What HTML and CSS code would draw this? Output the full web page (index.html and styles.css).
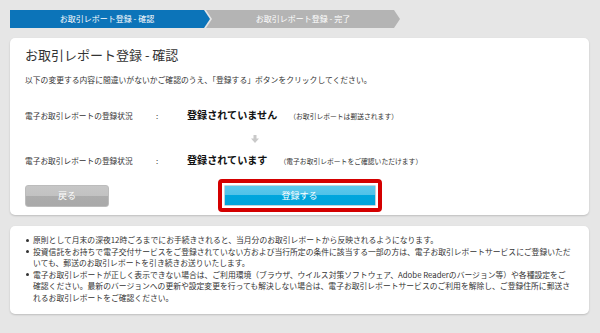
FILE: index.html
```html
<!DOCTYPE html>
<html lang="ja">
<head>
<meta charset="utf-8">
<title>お取引レポート登録 - 確認</title>
<link rel="stylesheet" href="styles.css">
</head>
<body>
<div class="page">
  <div class="steps">
    <div class="step step-active">お取引レポート登録 - 確認</div>
    <div class="step step-next">お取引レポート登録 - 完了</div>
  </div>

  <section class="card main">
    <h1 class="title">お取引レポート登録 - 確認</h1>
    <p class="lead">以下の変更する内容に間違いがないかご確認のうえ、「登録する」ボタンをクリックしてください。</p>

    <div class="status status-first">
      <span class="label">電子お取引レポートの登録状況</span>
      <span class="colon">:</span>
      <span class="value"><strong>登録されていません</strong><small class="note">（お取引レポートは郵送されます）</small></span>
    </div>
    <div class="arrow-row">
      <svg class="arrow" width="8" height="8" viewBox="0 0 8 8" aria-hidden="true">
        <rect x="2.5" y="0" width="3" height="4" fill="#c9c9c9"/>
        <polygon points="0,3.5 8,3.5 4,8" fill="#c9c9c9"/>
      </svg>
    </div>
    <div class="status">
      <span class="label">電子お取引レポートの登録状況</span>
      <span class="colon">:</span>
      <span class="value"><strong>登録されています</strong><small class="note">（電子お取引レポートをご確認いただけます）</small></span>
    </div>

    <div class="actions">
      <button class="btn btn-back" type="button">戻る</button>
      <div class="highlight">
        <button class="btn btn-primary" type="button">登録する</button>
      </div>
    </div>
  </section>

  <section class="card notes">
    <ul class="note-list">
      <li><span>原則として月末の深夜12時ごろまでにお手続きされると、当月分のお取引レポートから反映されるようになります。</span></li>
      <li><span>投資信託をお持ちで電子交付サービスをご登録されていない方および当行所定の条件に該当する一部の方は、電子お取引レポートサービスにご登録いただ<br>いても、郵送のお取引レポートを引き続きお送りいたします。</span></li>
      <li><span>電子お取引レポートが正しく表示できない場合は、ご利用環境（ブラウザ、ウイルス対策ソフトウェア、Adobe Readerのバージョン等）や各種設定をご<br>確認ください。最新のバージョンへの更新や設定変更を行っても解決しない場合は、電子お取引レポートサービスのご利用を解除し、ご登録住所に郵送さ<br>れるお取引レポートをご確認ください。</span></li>
    </ul>
  </section>
</div>
</body>
</html>
```

FILE: styles.css
```css
* {
  box-sizing: border-box;
}

html, body {
  margin: 0;
  height: 100%;
}

body {
  background: #e6e6e6;
  font-family: "Noto Sans CJK JP", "Noto Sans", sans-serif;
  color: #333;
}

.page {
  padding: 10px 11px 0 10px;
}

/* step indicator */
.steps {
  display: flex;
  height: 18px;
  margin-bottom: 10px;
}

.step {
  height: 18px;
  display: flex;
  align-items: center;
  justify-content: center;
  font-size: 8px;
  line-height: 1;
  color: #fff;
}

.step-active {
  width: 200px;
  padding-right: 6px;
  background: #0c74b9;
  clip-path: polygon(0 0, calc(100% - 6px) 0, 100% 50%, calc(100% - 6px) 100%, 0 100%);
}

.step-next {
  width: 194px;
  margin-left: -4px;
  background: #b4b4b4;
  clip-path: polygon(0 0, calc(100% - 6px) 0, 100% 50%, calc(100% - 6px) 100%, 0 100%, 6px 50%);
}

/* cards */
.card {
  background: #fff;
  border-radius: 5px;
  box-shadow: 0 1px 2px rgba(0, 0, 0, 0.18);
}

.main {
  padding: 7px 15px 3px;
}

.title {
  margin: 0;
  font-size: 13px;
  font-weight: normal;
  line-height: 20px;
  color: #333;
}

.lead {
  margin: 9px 0 0;
  font-size: 7.8px;
  line-height: 12px;
}

.status {
  display: grid;
  grid-template-columns: 131px 31px auto;
  align-items: baseline;
  height: 16px;
  line-height: 16px;
  font-size: 7.7px;
}

.status-first {
  margin-top: 21px;
}

.colon {
  font-size: 8px;
}

.value strong {
  font-size: 10.1px;
  font-weight: bold;
  color: #111;
}

.note {
  font-size: 6.8px;
  margin-left: 12px;
  color: #333;
}

.arrow-row {
  height: 10px;
  margin: 11px 0 8px;
  padding-left: 226px;
  display: flex;
  align-items: center;
}

.arrow {
  display: block;
}

/* buttons */
.actions {
  margin-top: 11px;
  display: grid;
  grid-template-columns: 1fr auto 1fr;
  align-items: center;
}

.btn {
  font-family: inherit;
  font-size: 9px;
  color: #fff;
  padding: 0;
  margin: 0;
  cursor: pointer;
}

.btn-back {
  justify-self: start;
  width: 84px;
  height: 22px;
  border: 1px solid #bcbcbc;
  border-radius: 3px;
  background: linear-gradient(#c7c7c7 0, #c2c2c2 50%, #acacac 50%, #a9a9a9 100%);
}

.highlight {
  border: 4px solid #d40000;
  border-radius: 4px;
  padding: 2px;
  background: #fff;
}

.btn-primary {
  display: block;
  width: 152px;
  height: 21px;
  border: 1px solid #c4d3da;
  border-radius: 1px;
  background: linear-gradient(#5cc8ec 0, #4fc2e8 50%, #00a6dd 50%, #00a3da 100%);
}

/* notes */
.notes {
  margin-top: 11px;
  padding: 8px 14px 10px;
}

.note-list {
  list-style: none;
  margin: 0;
  padding: 0;
}

.note-list li {
  display: grid;
  grid-template-columns: 9px auto;
  font-size: 7.8px;
  line-height: 11.6px;
  white-space: nowrap;
}

.note-list li::before {
  content: "";
  width: 3px;
  height: 3px;
  margin: 4.5px 0 0 2px;
  border-radius: 50%;
  background: #333;
}
```
